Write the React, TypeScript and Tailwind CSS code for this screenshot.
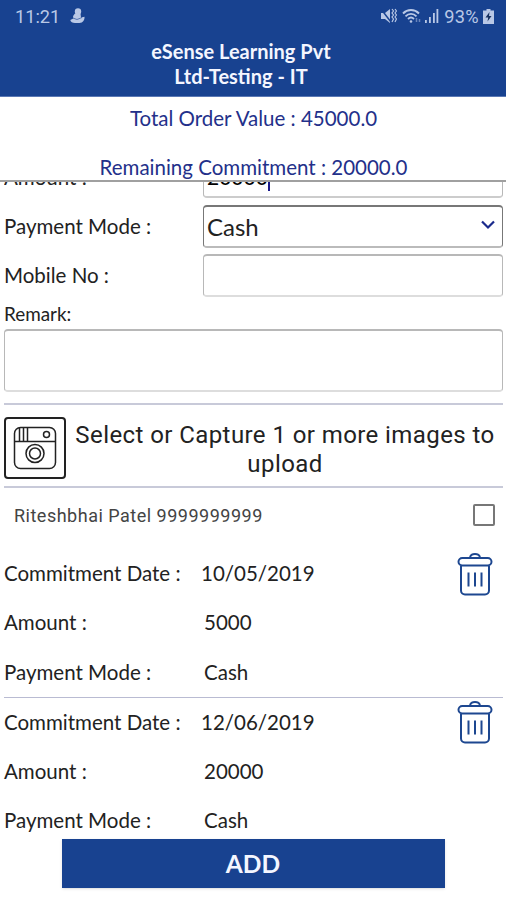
import React, { useState } from 'react';

interface Commitment {
  id: number;
  date: string;
  amount: string;
  mode: string;
}

const initialCommitments: Commitment[] = [
  { id: 1, date: '10/05/2019', amount: '5000', mode: 'Cash' },
  { id: 2, date: '12/06/2019', amount: '20000', mode: 'Cash' },
];

function TrashIcon() {
  return (
    <svg width="36" height="44" viewBox="0 0 36 44" fill="none" stroke="#1d4790" strokeWidth="2">
      <path d="M13 6c0-5.500 10-5.500 10 0" />
      <rect x="1.5" y="6" width="33" height="7.5" rx="3.75" />
      <path d="M4 14v24.5a4 4 0 0 0 4 4h20a4 4 0 0 0 4-4V14" />
      <path d="M11.5 20.5v14M18 20.5v14M24.5 20.5v14" />
    </svg>
  );
}

function CameraIcon() {
  return (
    <svg width="44" height="44" viewBox="0 0 44 44" fill="none" stroke="#222" strokeWidth="1.5">
      <rect x="1.5" y="1.5" width="41" height="41" rx="6" />
      <path d="M1.5 15.5h41M6.5 2v13M10.5 2v13M14.5 2v13" />
      <circle cx="33.5" cy="8.5" r="3" />
      <circle cx="22" cy="27.5" r="9" />
      <circle cx="22" cy="27.5" r="5.5" />
    </svg>
  );
}

function StatusBar() {
  return (
    <div className="flex h-[33px] items-center justify-between pl-[15px] pr-[12px] font-[Roboto,sans-serif] text-[18.2px] text-[#b9c8e6]">
      <div className="flex items-center gap-[10px]">
        <span>11:21</span>
        <svg width="15" height="16" viewBox="0 0 15 16" fill="currentColor">
          <circle cx="8" cy="3.5" r="3.2" />
          <path d="M5 5.5h5.5l.5 4 3.5-.7c.3 3-1.5 6.2-5 6.2H5c-2.5 0-4.5-1.2-4.7-3l3-1.5C2.5 8.5 3.5 7 5 5.5z" />
          <path d="M3 10l4 1.5 5-2" stroke="#184290" strokeWidth=".6" fill="none" />
        </svg>
      </div>
      <div className="flex items-center">
        <svg width="17" height="16" viewBox="0 0 17 16" fill="currentColor">
          <path d="M1 5h4l5-4v14l-5-4H1z" />
          <path d="M.5 .5l10.5 13.5" stroke="#184290" strokeWidth="1.5" />
          <path d="M12 1l1.500 2-1.500 2 1.500 2-1.500 2 1.500 2-1.500 3M15 1l1.500 2-1.500 2 1.500 2-1.500 2 1.500 2-1.500 3" stroke="currentColor" strokeWidth="1.2" fill="none" />
        </svg>
        <svg className="ml-[5px]" width="20" height="16" viewBox="0 0 20 16" fill="none" stroke="currentColor" strokeWidth="1.9">
          <path d="M1 5.5c4.5-4.6 11.5-4.6 16 0M3.5 8.3c3.2-3.2 7.8-3.2 11 0M6 11c1.8-1.7 4.2-1.7 6 0" />
          <circle cx="9" cy="13.5" r="1.3" fill="currentColor" stroke="none" />
          <path d="M14.5 10v4M17.5 11v3" strokeWidth="1.5" opacity=".5" />
        </svg>
        <svg className="ml-[2px]" width="16" height="16" viewBox="0 0 16 16" fill="currentColor">
          <path d="M1 12h1.8v3H1zM5 9h1.8v6H5zM9 5h1.8v10H9zM12.5 1h1.8v14h-1.8z" />
        </svg>
        <span className="ml-[4px] tracking-[0.3px]">93%</span>
        <svg className="ml-[4px]" width="11" height="15" viewBox="0 0 11 15">
          <path d="M3.5 0h4v1.5H11V15H0V1.5h3.5z" fill="currentColor" />
          <path d="M6.5 3L2.5 8.5h2.7L4.5 12.5l4-5.5H6z" fill="#16305f" />
        </svg>
      </div>
    </div>
  );
}

function CommitmentCard({ item, onDelete }: { item: Commitment; onDelete: (id: number) => void }) {
  return (
    <div className="grid auto-rows-[49.2px] grid-cols-[200px_1fr] items-center">
      <span>Commitment Date :</span>
      <div className="flex items-center justify-between pr-[10px]">
        <span className="-ml-[3px]">{item.date}</span>
        <button onClick={() => onDelete(item.id)}>
          <TrashIcon />
        </button>
      </div>
      <span>Amount :</span>
      <span>{item.amount}</span>
      <span>Payment Mode :</span>
      <span>{item.mode}</span>
    </div>
  );
}

export default function App() {
  const [commitments, setCommitments] = useState(initialCommitments);
  const [checked, setChecked] = useState(false);

  const handleDelete = (id: number) => {
    setCommitments(commitments.filter(c => c.id !== id));
  };

  return (
    <div className="flex h-[900px] w-[506px] flex-col overflow-hidden bg-white font-[Lato,sans-serif] text-[20.5px] text-[#222]">
      {/* Header */}
      <header className="h-[97px] shrink-0 border-b border-[#5a78b4] bg-[#184290]">
        <StatusBar />
        <h1 className="mt-[6px] pr-[24px] text-center text-[20px] leading-[24.5px] font-bold text-[#f4f6ff]">
          eSense Learning Pvt<br />Ltd-Testing - IT
        </h1>
      </header>

      {/* Order totals */}
      <div className="h-[85px] shrink-0 border-b-2 border-[#a0a0a0] pl-[1px] text-center leading-[49px] text-[#23308a]">
        <p className="-mt-[3px]">Total Order Value : 45000.0</p>
        <p>Remaining Commitment : 20000.0</p>
      </div>

      <main className="flex min-h-0 flex-1 flex-col overflow-hidden pr-[3px] pl-[4px]">
        {/* Amount row, scrolled partly under the totals */}
        <div className="flex h-[16px] shrink-0 items-end overflow-hidden">
          <label className="flex h-[41px] w-[199px] items-center">Amount :</label>
          <div className="flex h-[43px] flex-1 items-center rounded border border-b-2 border-[#b8b8b8] border-b-[#ccc] pt-[2px] pl-[3px] text-[21px] text-black">
            20000<span className="mt-[4px] h-[24px] w-[2px] bg-[#1a1a8c]" />
          </div>
        </div>

        <div className="mt-[7px] flex h-[43px] shrink-0 items-center">
          <label className="w-[199px]">Payment Mode :</label>
          <div className="flex h-full flex-1 items-center justify-between rounded border-t-2 border-r border-b-2 border-l border-[#777] border-b-[#bbb] pr-[7px] pl-[3px] text-[24px]">
            <span>Cash</span>
            <svg className="mb-[3px]" width="14" height="10" viewBox="0 0 14 10" fill="none" stroke="#1a2a8c" strokeWidth="2.2">
              <path d="M1 1.5l6 6 6-6" />
            </svg>
          </div>
        </div>

        <div className="mt-[6px] flex h-[43px] shrink-0 items-center">
          <label className="w-[199px]">Mobile No :</label>
          <input className="h-full min-w-0 flex-1 rounded border-t-2 border-r border-b-2 border-l border-[#b8b8b8] border-b-[#ddd]" />
        </div>

        <label className="mt-[5px] h-[24px] shrink-0 text-[18.9px] leading-[23px]">Remark:</label>
        <textarea className="mt-[3px] h-[63px] shrink-0 resize-none rounded border-t-2 border-r border-b-2 border-l border-[#b8b8b8] border-b-[#ddd]" />

        {/* Image upload */}
        <div className="mt-[11px] flex h-[85px] shrink-0 items-center border-y-2 border-[#c8cad9] pt-[5px]">
          <button className="flex h-[62px] w-[62px] shrink-0 items-center justify-center rounded border-2 border-[#222]">
            <CameraIcon />
          </button>
          <p className="flex-1 pt-[3px] pl-[1px] text-center font-[Roboto,sans-serif] text-[24px] leading-[28.5px] tracking-[0.42px]">
            Select or Capture 1 or more images to upload
          </p>
        </div>

        {/* Contact */}
        <div className="flex h-[61px] shrink-0 items-center justify-between pr-[8px] pb-[7px] pl-[10px]">
          <span className="font-[Roboto,sans-serif] text-[18px] tracking-[0.5px] text-[#444]">Riteshbhai Patel 9999999999</span>
          <button
            onClick={() => setChecked(!checked)}
            className={`h-[22px] w-[22px] rounded-[2px] border-2 border-[#777] ${checked ? 'bg-[#184290]' : 'bg-white'}`}
          />
        </div>

        {/* Commitments */}
        <div className="shrink-0 divide-y divide-[#b9bbd2]">
          {commitments.map(item => (
            <CommitmentCard key={item.id} item={item} onDelete={handleDelete} />
          ))}
        </div>
      </main>

      <footer className="z-10 flex h-[61px] shrink-0 items-start justify-center">
        <button className="h-[49px] w-[383px] bg-[#184290] pt-[1px] text-[24.5px] font-bold text-[#f4f6ff] shadow-sm">
          ADD
        </button>
      </footer>
    </div>
  );
}
